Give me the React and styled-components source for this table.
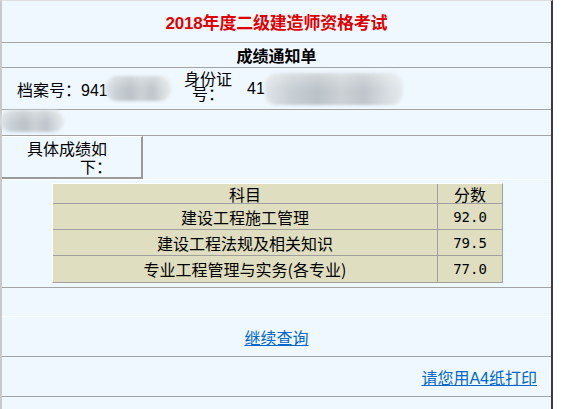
import React from 'react';
import styled, { createGlobalStyle } from 'styled-components';

const GlobalStyle = createGlobalStyle`
  html, body {
    margin: 0;
    padding: 0;
    background: #ffffff;
  }
  body {
    font-family: "Liberation Sans", "Noto Sans CJK SC", sans-serif;
    font-size: 16px;
    color: #000;
  }
`;

const Frame = styled.div`
  width: 549px;
  min-height: 408px;
  background: #eff8ff;
  border-top: 1px solid #dedede;
  border-left: 2px solid #c9c9c9;
  border-right: 2px solid #3c3c3c;
`;

const Row = styled.div`
  height: ${(p) => p.h}px;
  border-bottom: 1px solid ${(p) => (p.light ? '#fbfdff' : '#a3a3a3')};
  display: flex;
  align-items: center;
  justify-content: ${(p) => p.justify || 'center'};
  box-sizing: content-box;
`;

const Title = styled.h1`
  margin: 0;
  font-size: 17px;
  font-weight: bold;
  color: #e10000;
  letter-spacing: -0.2px;
`;

const SubTitle = styled.h2`
  margin: 0;
  font-size: 16px;
  font-weight: bold;
`;

const InfoRow = styled(Row)`
  justify-content: flex-start;
  padding-left: 15px;
  width: 534px;
`;

const Field = styled.div`
  display: flex;
  align-items: center;
  width: ${(p) => p.w}px;
  flex: none;
`;

const FieldLabel = styled.div`
  width: 50px;
  flex: none;
  text-align: center;
  line-height: 15px;
  margin-top: -3px;
`;

const Blur = styled.div`
  flex: none;
  width: ${(p) => p.w}px;
  height: ${(p) => p.h}px;
  margin-left: ${(p) => p.ml || 0}px;
  border-radius: 12px;
  background:
    linear-gradient(180deg, rgba(255, 255, 255, 0.35) 0%, rgba(255, 255, 255, 0) 50%),
    linear-gradient(90deg, #dfe5e9 0%, #c9d0d5 18%, #bcc3c8 38%, #cbd1d5 55%, #bfc6cb 72%, #d6dce0 88%, #e6ebee 100%);
  filter: blur(1.5px);
`;

const BlurRow = styled(Row)`
  justify-content: flex-start;
  align-items: flex-start;
`;

const ScoreLabelRow = styled(Row)`
  justify-content: flex-start;
  align-items: stretch;
`;

const ScoreLabel = styled.div`
  width: 141px;
  box-sizing: border-box;
  border-top: 1px solid #ffffff;
  border-right: 2px solid #9a9a9a;
  border-bottom: 2px solid #9a9a9a;
  padding-top: 4px;
  line-height: 18px;
`;

const Line = styled.span`
  display: block;
  padding-left: ${(p) => p.indent}px;
  white-space: nowrap;
`;

const TableRow = styled(Row)`
  justify-content: flex-start;
  align-items: flex-start;
  padding-top: 3px;
  height: 104px;
`;

const ScoreTable = styled.div`
  margin-left: 50px;
  display: grid;
  grid-template-columns: 384px 64px;
  grid-template-rows: 19px 25px 25px 26px;
  gap: 1px;
  background: #a0a0a0;
  border: 1px solid;
  border-color: #ffffff #a0a0a0 #a0a0a0 #ffffff;
`;

const Cell = styled.div`
  background: #dfdec1;
  display: flex;
  align-items: center;
  justify-content: center;
  font-size: 16px;
  line-height: 1;
  font-family: ${(p) => (p.num ? '"DejaVu Sans Mono", monospace' : '"Noto Sans CJK SC", sans-serif')};
  font-size: ${(p) => (p.num ? '14px' : '16px')};
`;

const Link = styled.a`
  color: #0066cc;
  text-decoration: underline;
  font-size: 16px;
  cursor: pointer;
`;

const PrintRow = styled(Row)`
  justify-content: flex-end;
  padding-right: 14px;
  width: 535px;
`;

const scores = [
  { name: '科目', score: '分数', head: true },
  { name: '建设工程施工管理', score: '92.0' },
  { name: '建设工程法规及相关知识', score: '79.5' },
  { name: '专业工程管理与实务(各专业)', score: '77.0' },
];

export default function App() {
  return (
    <>
      <GlobalStyle />
      <Frame>
        <Row h={41}>
          <Title>2018年度二级建造师资格考试</Title>
        </Row>
        <Row h={24}>
          <SubTitle>成绩通知单</SubTitle>
        </Row>
        <InfoRow h={41}>
          <Field w={166}>
            <span>档案号：941</span>
            <Blur w={66} h={25} ml={-3} />
          </Field>
          <FieldLabel>身份证号：</FieldLabel>
          <Field w={200}>
            <span style={{ marginLeft: 14 }}>41</span>
            <Blur w={138} h={32} ml={0} />
          </Field>
        </InfoRow>
        <BlurRow h={25}>
          <Blur w={64} h={22} ml={-2} />
        </BlurRow>
        <ScoreLabelRow h={43} light>
          <ScoreLabel>
            <Line indent={25}>具体成绩如</Line>
            <Line indent={78}>下：</Line>
          </ScoreLabel>
        </ScoreLabelRow>
        <TableRow h={104}>
          <ScoreTable>
            {scores.map((s) => (
              <React.Fragment key={s.name}>
                <Cell>{s.name}</Cell>
                <Cell num={!s.head}>{s.score}</Cell>
              </React.Fragment>
            ))}
          </ScoreTable>
        </TableRow>
        <Row h={28} light />
        <Row h={39}>
          <Link>继续查询</Link>
        </Row>
        <PrintRow h={39}>
          <Link>请您用A4纸打印</Link>
        </PrintRow>
      </Frame>
    </>
  );
}
